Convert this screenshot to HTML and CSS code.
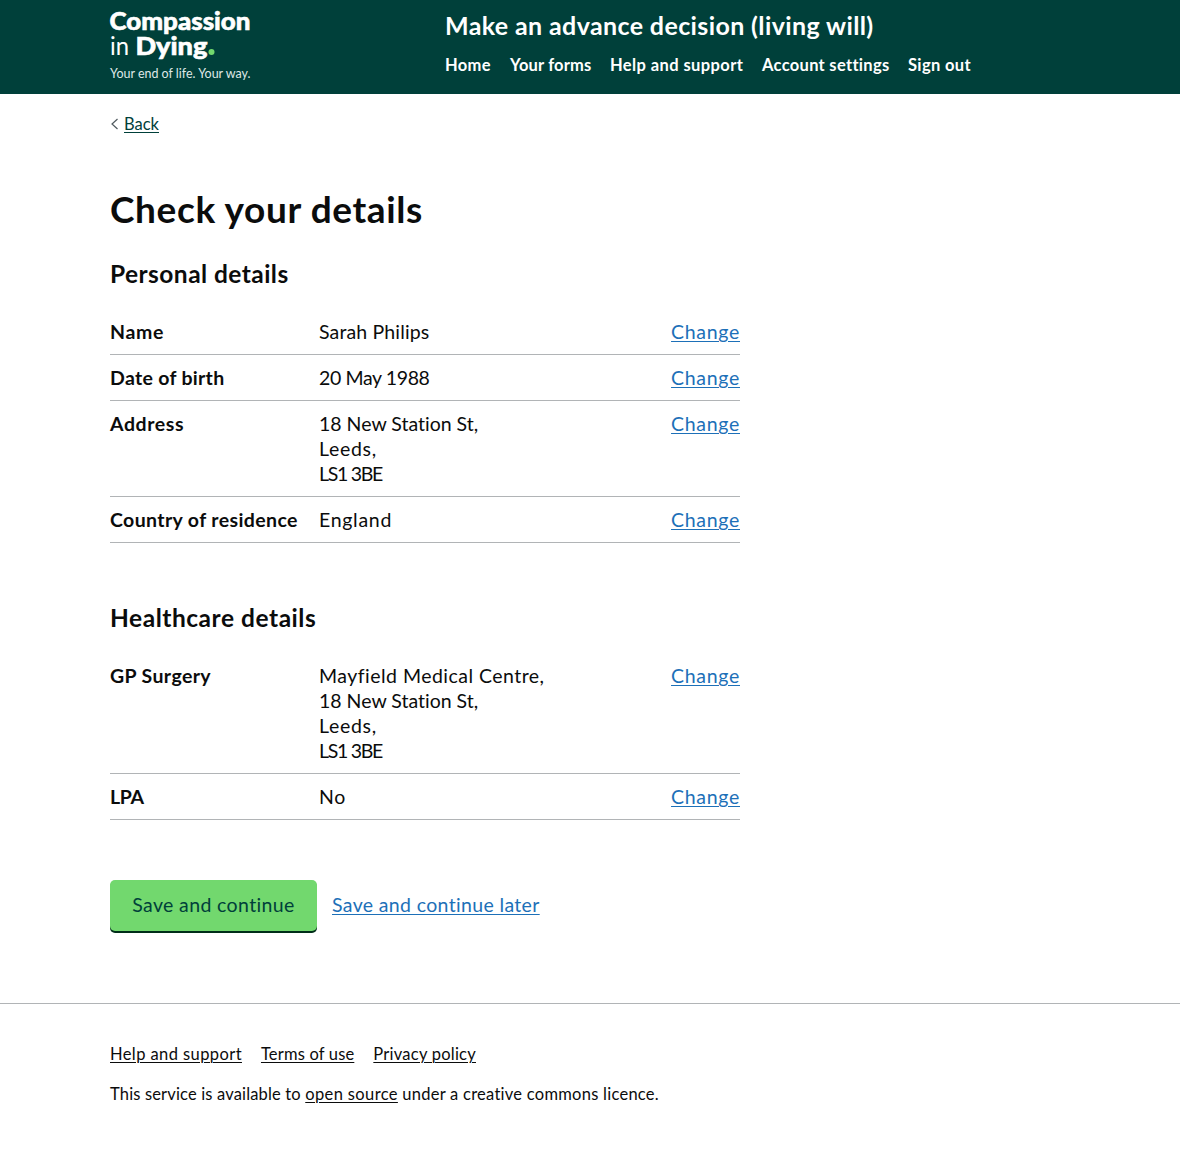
FILE: index.html
```
<!DOCTYPE html>
<html lang="en">
<head>
<meta charset="utf-8">
<title>Check your details</title>
<link rel="stylesheet" href="styles.css">
</head>
<body>
<header class="header">
  <div class="container header-inner">
    <a class="logo" href="#" aria-label="Compassion in Dying">
      <svg width="142" height="84" viewBox="0 0 142 84">
        <g fill="#fff">
          <text class="logo-heavy" x="-0.5" y="30" textLength="141" lengthAdjust="spacingAndGlyphs">Compassion</text>
          <text class="logo-light" x="0" y="55" textLength="19" lengthAdjust="spacingAndGlyphs">in</text>
          <text class="logo-heavy" x="25.5" y="55" textLength="72" lengthAdjust="spacingAndGlyphs">Dying</text>
          <text class="logo-tag" x="0" y="77.5" textLength="140.5" lengthAdjust="spacingAndGlyphs">Your end of life. Your way.</text>
        </g>
        <circle cx="101.5" cy="52" r="3" fill="#72d86e"/>
      </svg>
    </a>
    <div class="header-content">
      <div class="service-name">Make an advance decision (living will)</div>
      <nav class="nav">
        <a href="#" class="nav-home">Home</a>
        <a href="#" class="nav-forms">Your forms</a>
        <a href="#" class="nav-help">Help and support</a>
        <a href="#" class="nav-account">Account settings</a>
        <a href="#" class="nav-out">Sign out</a>
      </nav>
    </div>
  </div>
</header>
<main class="container main">
  <div class="back">
    <svg width="8" height="12" viewBox="0 0 8 12"><path d="M6.5 1 1 6 6.5 11" fill="none" stroke="#505a5f" stroke-width="1.2"/></svg>
    <a href="#">Back</a>
  </div>
  <h1>Check your details</h1>
  <section class="group">
    <h2 class="h-personal">Personal details</h2>
    <dl class="summary">
      <div class="row"><dt class="k-name">Name</dt><dd class="v-name">Sarah Philips</dd><dd class="action"><a href="#">Change</a></dd></div>
      <div class="row"><dt class="k-dob">Date of birth</dt><dd class="v-dob">20 May 1988</dd><dd class="action"><a href="#">Change</a></dd></div>
      <div class="row"><dt class="k-address">Address</dt><dd><span class="v-street">18 New Station St,</span><br><span class="v-city">Leeds,</span><br><span class="v-post">LS1 3BE</span></dd><dd class="action"><a href="#">Change</a></dd></div>
      <div class="row"><dt class="k-country">Country of residence</dt><dd class="v-city">England</dd><dd class="action"><a href="#">Change</a></dd></div>
    </dl>
  </section>
  <section class="group">
    <h2 class="h-health">Healthcare details</h2>
    <dl class="summary">
      <div class="row"><dt class="k-country">GP Surgery</dt><dd><span class="v-centre">Mayfield Medical Centre,</span><br><span class="v-street">18 New Station St,</span><br><span class="v-city">Leeds,</span><br><span class="v-post">LS1 3BE</span></dd><dd class="action"><a href="#">Change</a></dd></div>
      <div class="row"><dt class="k-lpa">LPA</dt><dd class="v-city">No</dd><dd class="action"><a href="#">Change</a></dd></div>
    </dl>
  </section>
  <div class="actions">
    <button class="button">Save and continue</button>
    <a class="later" href="#">Save and continue later</a>
  </div>
</main>
<footer class="footer">
  <div class="container">
    <nav class="footer-links">
      <a href="#" class="f-help">Help and support</a>
      <a href="#" class="f-terms">Terms of use</a>
      <a href="#" class="f-privacy">Privacy policy</a>
    </nav>
    <p class="licence">This service is available to <a href="#">open source</a> <span class="licence-end">under a creative commons licence.</span></p>
  </div>
</footer>
</body>
</html>
```
FILE: styles.css
```
* { box-sizing: border-box; }
body {
  margin: 0;
  background: #fff;
  color: #0b0c0c;
  font: 400 19.5px/25px Lato, "Open Sans", sans-serif;
  font-variant-ligatures: none;
}
.container { width: 960px; margin: 0 auto; }
a {
  color: #1d70b8;
  text-decoration: underline;
  text-decoration-thickness: 1px;
  text-underline-offset: 2px;
}

/* Header */
.header { height: 94px; background: #00403a; color: #fff; }
.header-inner { display: flex; }
.logo { width: 335px; height: 84px; text-decoration: none; }
.logo svg { display: block; overflow: visible; }
.logo-heavy { font-weight: 900; font-size: 25px; stroke: #fff; stroke-width: .6px; }
.logo-light { font-weight: 400; font-size: 25px; }
.logo-tag { font-weight: 400; font-size: 12.5px; fill: #dfe8e7; }
.header-content { padding-top: 10px; }
.service-name {
  font-size: 25px;
  font-weight: 700;
  line-height: 30px;
  letter-spacing: .38px;
}
.nav { display: flex; margin-top: 15px; font-size: 16.5px; font-weight: 700; line-height: 20px; }
.nav a { color: #fff; text-decoration: none; white-space: nowrap; }
.nav-home { width: 65px; letter-spacing: .3px; }
.nav-forms { width: 100px; letter-spacing: .15px; }
.nav-help { width: 152px; letter-spacing: .4px; }
.nav-account { width: 146px; letter-spacing: .3px; }
.nav-out { letter-spacing: .35px; }

/* Page content */
.back { display: flex; align-items: center; gap: 5px; padding: 20px 0 0 1px; font-size: 16.5px; line-height: 20px; }
.back a { color: #00403a; }
h1 {
  margin: 50px 0 0;
  font-size: 37px;
  line-height: 50px;
  font-weight: 700;
  letter-spacing: .62px;
}
h2 { margin: 0 0 20px; font-size: 24.5px; line-height: 30px; font-weight: 700; }
.h-personal { letter-spacing: .45px; }
.h-health { letter-spacing: .54px; }
.group { margin-top: 25px; }
.group + .group { margin-top: 60px; }
.summary { margin: 0; width: 630px; }
.row { display: flex; padding: 10px 0; border-bottom: 1px solid #b1b4b6; }
dt { width: 209px; font-weight: 700; }
dd { margin: 0; }
.action { margin-left: auto; letter-spacing: .7px; }
.k-name { letter-spacing: .65px; }
.k-dob { letter-spacing: .3px; }
.k-address { letter-spacing: .6px; }
.k-country { letter-spacing: .38px; }
.k-lpa { letter-spacing: -.4px; }
.v-name { letter-spacing: .15px; }
.v-dob { letter-spacing: -.38px; }
.v-street { letter-spacing: 0; }
.v-city { letter-spacing: .7px; }
.v-post { letter-spacing: -1.3px; }
.v-centre { letter-spacing: .47px; }

.actions { display: flex; gap: 15px; margin-top: 60px; }
.button {
  width: 207px;
  height: 51px;
  padding: 0 0 2px;
  border: 0;
  border-radius: 5px;
  background: #72d86e;
  box-shadow: 0 2px 0 #002d18;
  color: #00403a;
  font: inherit;
  letter-spacing: .38px;
}
.later { align-self: center; padding-bottom: 2px; letter-spacing: .35px; }

/* Footer */
.footer { margin-top: 72px; padding-top: 40px; border-top: 1px solid #b1b4b6; font-size: 16.5px; line-height: 20px; }
.footer a { color: #0b0c0c; }
.footer-links { display: flex; gap: 19px; }
.f-help { letter-spacing: .41px; }
.f-terms { letter-spacing: .17px; }
.f-privacy { letter-spacing: .24px; }
.licence { margin: 20px 0 0; letter-spacing: .16px; }
.licence a { letter-spacing: .37px; }
.licence-end { letter-spacing: .26px; }
```
